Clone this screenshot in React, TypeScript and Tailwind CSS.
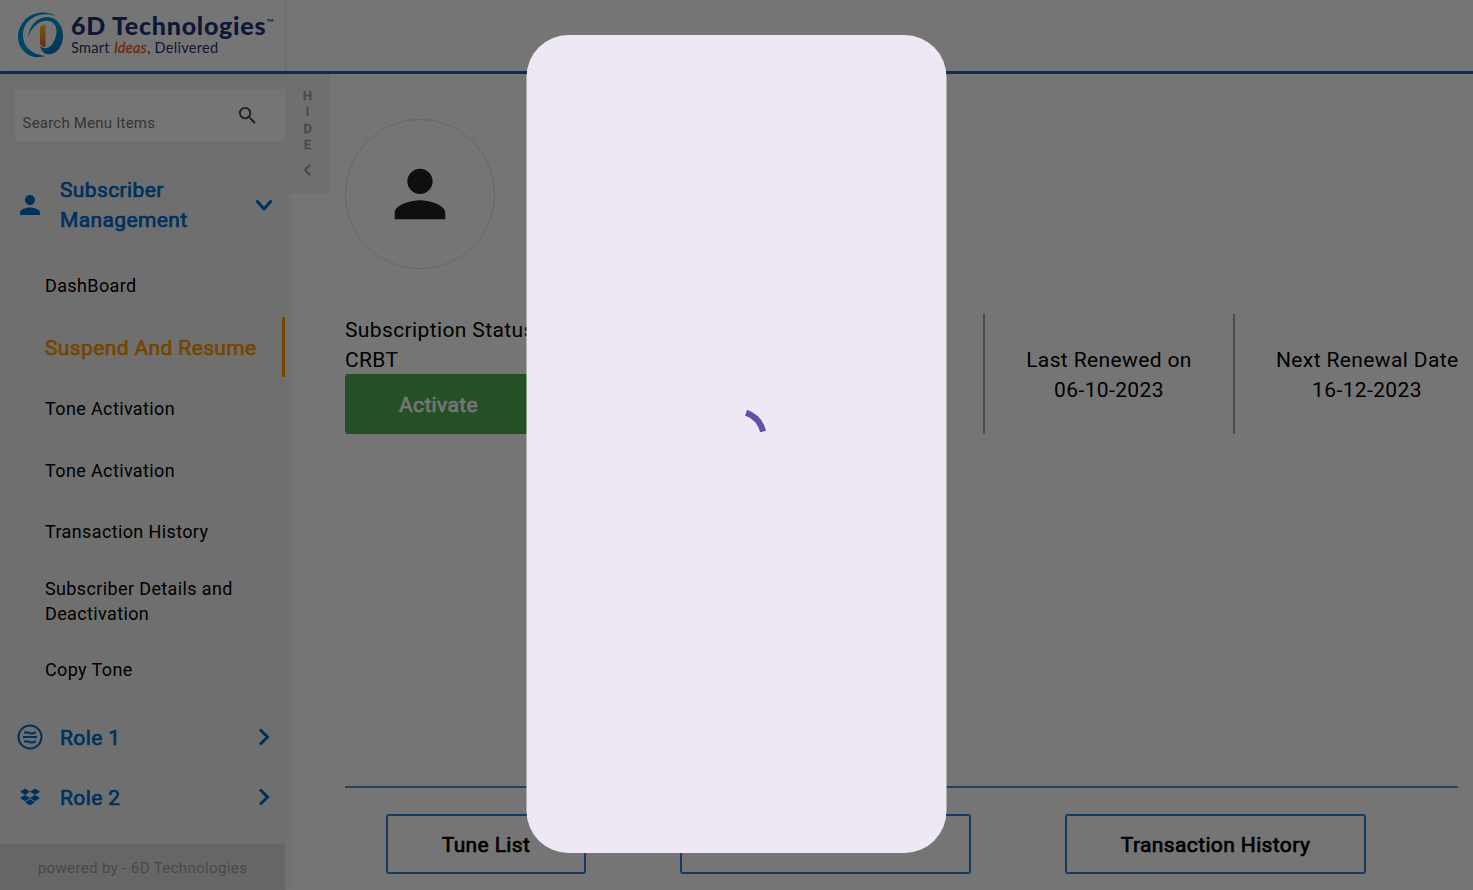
import { FaDropbox } from "react-icons/fa";
import { MdPerson, MdSearch } from "react-icons/md";

const menuItems = [
  { label: "DashBoard", box: "h-[61px]" },
  { label: "Suspend And Resume", box: "h-[62px]", active: true },
  { label: "Tone Activation", box: "h-[61px]" },
  { label: "Tone Activation", box: "h-[62px]" },
  { label: "Transaction History", box: "h-[61px]" },
  { label: "Subscriber Details and Deactivation", box: "h-[77px]" },
  { label: "Copy Tone", box: "h-[60px]" },
];

function Chevron({ className, d }: { className: string; d: string }) {
  return (
    <svg viewBox="0 0 18 18" className={className} fill="none" stroke="currentColor" strokeWidth="3">
      <path d={d} />
    </svg>
  );
}

function Logo() {
  return (
    <div className="flex h-[71px] w-[287px] shrink-0 border-r-2 border-[#f2f2f2] pl-[17px] pt-[11px]">
      <svg viewBox="0 0 47 48" className="h-12 w-[47px] shrink-0">
        <defs>
          <linearGradient id="ring" x1="0" y1="0" x2="1" y2="1">
            <stop offset="0" stopColor="#008fd6" />
            <stop offset="0.5" stopColor="#0098e0" />
            <stop offset="1" stopColor="#0065ae" />
          </linearGradient>
          <linearGradient id="bar" x1="0" y1="0" x2="0" y2="1">
            <stop offset="0" stopColor="#ffc629" />
            <stop offset="1" stopColor="#f05a22" />
          </linearGradient>
        </defs>
        <path
          d="M39 5C31-.5 15 0 7 10C-3 22 0 38 12 44C17 47 23 46.500 28 45C14 43 5 35 6 22C7 9 22-1 39 5Z"
          fill="url(#ring)"
        />
        <path
          d="M11 27C12 10 28 1 39 9C50 18 47 37 37 42C31 45 25 43 23 35C28 39 33 37 36 32C41 23 41 14 34 10.500C25 7 14 15 11 27Z"
          fill="url(#ring)"
        />
        <path d="M23 16.500Q23 14 28.500 14V36Q24 35.500 23 33Z" fill="url(#bar)" />
      </svg>
      <div className="ml-[7px] pt-px font-[Lato,sans-serif] text-[#1f3474]">
        <div className="flex h-[28px] items-start whitespace-nowrap text-[25px] font-black leading-[27px] tracking-[0.75px]">
          <span>6D Technologies</span>
          <span className="mt-[5px] text-[10px] font-normal leading-[10px] tracking-normal">™</span>
        </div>
        <div className="whitespace-nowrap text-[14.500px] leading-4 tracking-[0.31px]">
          Smart <span className="italic text-[#e8602c] [-webkit-text-stroke:0.3px_#e8602c]">Ideas</span>, Delivered
        </div>
      </div>
    </div>
  );
}

function Sidebar() {
  return (
    <aside className="relative z-10 flex w-[285px] shrink-0 flex-col bg-[#f2f2f2] shadow-[3px_0_9px_rgba(0,0,0,0.07)]">
      <div className="ml-[15px] mt-[15px] flex h-[52px] w-[270px] shrink-0 rounded-[2px] bg-white pl-[7.500px]">
        <span className="mt-[22px] flex-1 text-[15px] leading-6 tracking-[0.22px] text-[#757575]">Search Menu Items</span>
        <MdSearch className="mr-[26px] mt-[15px] size-[23px] text-[#424242]" />
      </div>
      <div className="mt-[34px] flex h-[60px] shrink-0 items-center pl-[15px] text-[#006bcb]">
        <MdPerson className="size-[30px]" />
        <span className="ml-[15px] w-[190px] text-[21px] leading-[30px] tracking-[0.375px] [-webkit-text-stroke:0.7px]">
          Subscriber Management
        </span>
        <Chevron className="mb-px ml-[5px] size-[18px]" d="M1.500 4.500L9 13L16.500 4.500" />
      </div>
      <nav className="mt-[20px] flex flex-col">
        {menuItems.map((item, index) =>
          item.active ? (
            <div key={index} className={"flex items-center " + item.box}>
              <div className="flex h-[60px] w-full items-center border-r-[3px] border-[#ff9800] pl-[45px] pt-[3px] text-[21px] tracking-[0.375px] text-[#ff9800] [-webkit-text-stroke:0.7px]">
                {item.label}
              </div>
            </div>
          ) : (
            <div key={index} className={"flex items-center pl-[45px] pr-[40px] text-[18px] leading-[25px] tracking-[0.375px] text-black " + item.box}>
              {item.label}
            </div>
          ),
        )}
      </nav>
      <div className="mt-[8px] flex h-[60px] items-center pl-[17px] text-[#006bcb]">
        <svg viewBox="0 0 26 26" className="size-[26px]" fill="none" stroke="currentColor" strokeWidth="2">
          <circle cx="13" cy="13" r="11.500" />
          <path d="M6 13H20M7 8.500H11C13 8.500 12 9.500 14 9.500H15C17 9.500 16 8.500 19 8.500M7 17.500H11C13 17.500 12 18.500 14 18.500H15C17 18.500 16 17.500 19 17.500" />
        </svg>
        <span className="ml-[17px] flex-1 pt-[3px] text-[21px] tracking-[0.375px] [-webkit-text-stroke:0.7px]">Role 1</span>
        <Chevron className="mr-[12px] size-[18px]" d="M5 1.500L12.500 9L5 16.500" />
      </div>
      <div className="flex h-[60px] items-center pl-[20px] text-[#006bcb]">
        <FaDropbox className="size-[20px]" />
        <span className="ml-[20px] flex-1 pt-[3px] text-[21px] tracking-[0.375px] [-webkit-text-stroke:0.7px]">Role 2</span>
        <Chevron className="mr-[12px] size-[18px]" d="M5 1.500L12.500 9L5 16.500" />
      </div>
      <footer className="mt-auto flex h-[46px] items-center justify-center bg-[#dedede] pt-[3px] text-[15px] tracking-[0.375px] text-[#9e9e9e]">
        powered by - 6D Technologies
      </footer>
    </aside>
  );
}

function HideTab() {
  return (
    <div className="relative z-10 flex h-[120px] w-[45px] shrink-0 flex-col items-center bg-[#f2f2f2] pt-[14px] text-[12.500px] leading-[16.300px] text-[#9e9e9e] [-webkit-text-stroke:0.7px]">
      <span>H</span>
      <span>I</span>
      <span>D</span>
      <span>E</span>
      <svg viewBox="0 0 10 12" className="mr-px mt-[11px] h-3 w-2.500" fill="none" stroke="currentColor" strokeWidth="2">
        <path d="M8 1L3 6L8 11" />
      </svg>
    </div>
  );
}

function Account() {
  return (
    <main className="flex flex-1 flex-col px-[15px] pt-[45px] text-[21px] leading-[30px] tracking-[0.375px] text-black">
      <div className="flex size-[150px] items-center justify-center rounded-full border-[1.500px] border-[#e0e0e0]">
        <svg viewBox="0 0 24 24" className="size-[76px]" fill="#212121">
          <path d="M12 12c2.210 0 4-1.790 4-4s-1.790-4-4-4-4 1.790-4 4 1.790 4 4 4zm0 2c-2.670 0-8 1.340-8 4v2h16v-2c0-2.660-5.330-4-8-4z" />
        </svg>
      </div>
      <section className="mt-[45px] flex h-[120px] items-center">
        <div className="w-[187px] shrink-0">
          <div className="h-[30px] whitespace-nowrap pt-px">Subscription Status</div>
          <div className="h-[30px] pt-px">CRBT</div>
          <button className="flex h-[60px] w-full items-center justify-center rounded-[3px] bg-[#4caf50] text-[21px] text-white [-webkit-text-stroke:0.7px]">
            <span className="pt-0.5">Activate</span>
          </button>
        </div>
        <div className="flex-1" />
        <div className="h-full w-[2px] bg-[#a6a6a6]" />
        <div className="w-[248px] pt-0.5 text-center">
          Last Renewed on
          <br />
          06-10-2023
        </div>
        <div className="h-full w-[2px] bg-[#a6a6a6]" />
        <div className="ml-[41px] w-[182px] whitespace-nowrap pt-0.5 text-center">
          Next Renewal Date
          <br />
          16-12-2023
        </div>
      </section>
      <div className="mt-[352px] h-[2px] bg-[#4b90d6]" />
      <div className="mt-[26px] flex pl-[41px] [-webkit-text-stroke:0.7px]">
        <button className="h-[60px] w-[200px] rounded-[3px] border-2 border-[#2b7fd1] pt-0.5">Tune List</button>
        <button className="ml-[94px] h-[60px] w-[291px] rounded-[3px] border-2 border-[#2b7fd1]" />
        <button className="ml-[94px] h-[60px] w-[301px] rounded-[3px] border-2 border-[#2b7fd1] pt-0.5">Transaction History</button>
      </div>
    </main>
  );
}

export default function App() {
  return (
    <div className="relative flex h-[890px] w-full flex-col overflow-hidden bg-white font-[Roboto,sans-serif]">
      <header className="h-[74px] shrink-0 border-b-[3px] border-[#006bcb]">
        <Logo />
      </header>
      <div className="flex flex-1">
        <Sidebar />
        <HideTab />
        <Account />
      </div>
      <div className="absolute inset-0 z-20 flex items-start justify-center bg-black/54 pt-[35px]">
        <div
          role="dialog"
          className="mr-px flex h-[818px] w-[420px] transform-[translateX(0.5px)] justify-center rounded-[42px] bg-[#eee8f4] pt-[370px]"
        >
          <svg viewBox="0 0 66 66" className="size-[66px]" fill="none">
            <path d="M42.600 7.600A27 27 0 0 1 59.600 26.500" stroke="#6750a4" strokeWidth="6" />
          </svg>
        </div>
      </div>
    </div>
  );
}
